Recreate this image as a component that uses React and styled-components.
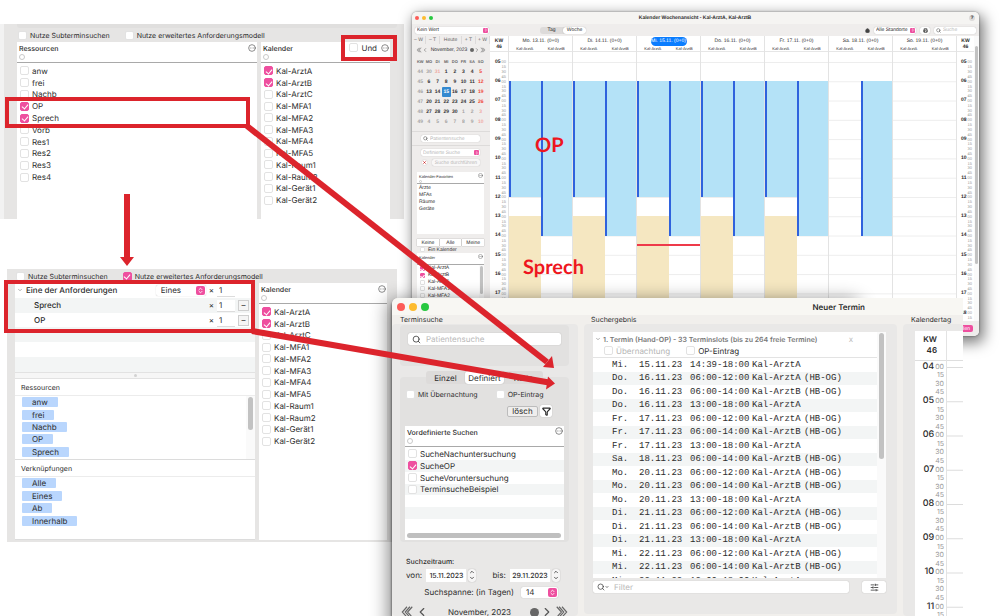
import styled, { createGlobalStyle, css } from "styled-components"
import { ChevronLeft, ChevronRight, ChevronDown, ChevronUp, ChevronsUpDown, CircleEllipsis, Search, House, Printer, SlidersHorizontal, Funnel } from "lucide-react"

const GlobalStyle = createGlobalStyle`
    * {
        box-sizing: border-box;
    }
    body {
        margin: 0;
        background-color: white;
        font-family: Inter, "Liberation Sans", sans-serif;
        font-size: 8px;
        color: #2c2c2c;
        text-rendering: geometricPrecision;
    }
    button, input, select {
        font: inherit;
        color: inherit;
        margin: 0;
        padding: 0;
        border: none;
        background: none;
        appearance: none;
        min-width: 0;
        text-rendering: inherit;
    }
    input:focus, select:focus {
        outline: none;
    }
    ::placeholder {
        color: #b9b9b9;
        opacity: 1;
    }
    svg {
        flex-shrink: 0;
        display: block;
    }
`

/* ---------- shared parts ---------- */

const Desktop = styled.main`
    position: relative;
    height: 100vh;
    overflow: hidden;
`
const Row = styled.div`
    display: flex;
    align-items: center;
    flex-shrink: 0;
    gap: ${props=>props.$gap || 0}px;
    height: ${props=>props.$height ? props.$height + "px" : "auto"};
    padding: ${props=>props.$padding || "0"};
    justify-content: ${props=>props.$justify || "flex-start"};
    white-space: nowrap;
`
const CheckLabel = styled.label`
    display: flex;
    align-items: center;
    gap: 3px;
    white-space: nowrap;
    color: ${props=>props.$muted ? "#b5b5b5" : "inherit"};
`
const Box = styled.input`
    display: grid;
    place-items: center;
    width: ${props=>props.$small ? 5 : 9}px;
    height: ${props=>props.$small ? 5 : 9}px;
    border: 1px solid #e2e2e2;
    border-radius: ${props=>props.$small ? 1 : 2}px;
    background-color: white;
    flex-shrink: 0;

    &:checked {
        border-color: #ee4f9f;
        background-color: #ee4f9f;
    }
    &:checked::after {
        content: "";
        width: ${props=>props.$small ? 2 : 3}px;
        height: ${props=>props.$small ? 3 : 5}px;
        border: solid white;
        border-width: 0 1px 1px 0;
        transform: rotate(40deg);
    }
`
const Knob = styled.span`
    display: grid;
    place-items: center;
    width: ${props=>props.$size || 9}px;
    height: ${props=>props.$size || 9}px;
    border-radius: ${props=>props.$size < 9 ? 1 : 2}px;
    background-color: #ee4f9f;
    color: white;
    flex-shrink: 0;
`
const Picker = styled.span`
    display: flex;
    align-items: center;
    height: ${props=>props.$height || 11}px;
    width: ${props=>props.$width ? props.$width + "px" : "auto"};
    padding: 0 1px 0 ${props=>props.$inset || 4}px;
    border-radius: 2px;
    background-color: white;
    box-shadow: 0 0 1px rgba(0, 0, 0, 0.3);
    color: ${props=>props.$muted ? "#b9b9b9" : "inherit"};

    select {
        flex: 1;
    }
`
const RunButton = styled.button`
    flex: 1;
    height: 7px;
    border-radius: 2px;
    background-color: #f8f7f7;
    box-shadow: 0 0 1px rgba(0, 0, 0, 0.3);
    color: #b9b9b9;
    white-space: nowrap;
`
const SearchField = styled.label`
    display: flex;
    align-items: center;
    gap: ${props=>props.$small ? 2 : 5}px;
    height: ${props=>props.$small ? 7 : 12}px;
    padding: 0 ${props=>props.$small ? 2 : 4}px;
    border-radius: 2px;
    background-color: white;
    box-shadow: 0 0 1px rgba(0, 0, 0, 0.3);
    flex: ${props=>props.$grow ? 1 : "none"};
    width: ${props=>props.$width ? props.$width + "px" : "auto"};

    input {
        flex: 1;
        width: 20px;
    }
`
const ListBox = styled.section`
    display: flex;
    flex-direction: column;
    background-color: white;
    flex: ${props=>props.$width ? "none" : 1};
    width: ${props=>props.$width ? props.$width + "px" : "auto"};
    min-width: 0;
`
const ListHead = styled.header`
    display: flex;
    justify-content: space-between;
    height: ${props=>props.$small ? 12 : 21}px;
    padding: 1px 1px 0 2px;
    border-bottom: 1px solid #a9a9a9;
    flex-shrink: 0;
`
const ListTitle = styled.h2`
    margin: 0;
    font-size: ${props=>props.$small ? 4 : 7}px;
    line-height: ${props=>props.$small ? 7 : 11}px;
    font-weight: 500;
    white-space: nowrap;
`
const Dot = styled.span`
    display: block;
    width: ${props=>props.$small ? 3 : 6}px;
    height: ${props=>props.$small ? 3 : 6}px;
    border: 1px solid #c9c9c9;
    border-radius: 50%;
`
const List = styled.ul`
    list-style: none;
    margin: 0;
    padding: 0;
    display: grid;
    grid-auto-rows: minmax(0, 1fr);
    height: ${props=>props.$height}px;
    margin-top: ${props=>props.$top || 0}px;

    li {
        display: flex;
        align-items: center;
        padding-left: 3px;
    }
    ${props=>props.$striped && css`
        li:nth-child(even) {
            background-color: #f3f5f5;
        }
    `}
`
const Lights = styled.div`
    display: flex;
    gap: ${props=>props.$gap}px;

    span {
        width: ${props=>props.$size}px;
        height: ${props=>props.$size}px;
        border-radius: 50%;
        background-color: #fc5b57;
    }
    span:nth-child(2) {
        background-color: #fdbb2e;
    }
    span:nth-child(3) {
        background-color: #28c840;
    }
`
const Segments = styled.div`
    display: flex;
    border-radius: 3px;
    background-color: #dddbda;
    height: ${props=>props.$height}px;
    width: ${props=>props.$width}px;
`
const Segment = styled.button`
    flex: 1;
    border-radius: 3px;
    background-color: ${props=>props.$active ? "white" : "transparent"};
    box-shadow: ${props=>props.$active ? "0 0 1px rgba(0, 0, 0, 0.3)" : "none"};
`

const Check = ({ label, checked, small, muted }) => (
  <CheckLabel $muted={muted}>
    <Box type="checkbox" $small={small} defaultChecked={checked} disabled={muted}/>
    {label}
  </CheckLabel>
)

const PinkSelect = ({ label, value, small, width, muted }) => (
  <Picker $height={small ? 7 : 11} $inset={small ? 2 : 5} $width={width} $muted={muted}>
    <select aria-label={label}><option>{value}</option></select>
    <Knob $size={small ? 5 : 9}><ChevronsUpDown size={small ? 4 : 7} strokeWidth={3}/></Knob>
  </Picker>
)

/* ---------- requirement panels on the left ---------- */

const Panel = styled.section`
    position: absolute;
    left: ${props=>props.$left}px;
    top: ${props=>props.$top}px;
    width: ${props=>props.$width}px;
    background-color: #e6e5e4;
    border-left: ${props=>props.$edge || 0}px solid #f2f2f2;
`
const PanelTop = styled.div`
    height: 4px;
    margin: 0 7px 0 13px;
    border-radius: 0 0 3px 3px;
    background-color: #e0dfde;
`
const PanelChecks = styled.div`
    display: flex;
    align-items: center;
    gap: 15px;
    height: 14px;
    padding-left: ${props=>props.$inset}px;
    font-size: 7px;
`
const Columns = styled.div`
    display: flex;
    gap: ${props=>props.$gap}px;
    height: ${props=>props.$height}px;
    padding: ${props=>props.$padding};
`
const Stack = styled.div`
    display: flex;
    flex-direction: column;
    flex: 1;
    min-width: 0;
`
const Tree = styled.div`
    display: grid;
    grid-auto-rows: 1fr;
    height: 89px;
    background-color: white;
`
const TreeRow = styled.div`
    display: flex;
    align-items: center;
    padding: 0 6px 0 ${props=>props.$level ? 19 : 2}px;
    gap: 3px;
    background-color: ${props=>props.$tinted ? "#f3f5f5" : "white"};

    strong {
        flex: 1;
        font-weight: 500;
    }
`
const Count = styled.input`
    width: 18px;
    height: 11px;
    padding-left: 2px;
    background-color: white;
    box-shadow: 0 1px 0 #dcdcdc;
`
const MinusButton = styled.button`
    width: 11px;
    height: 11px;
    line-height: 8px;
    border: 1px solid #cfcfcf;
    background-color: #f5f5f5;
`
const RowEnd = styled.span`
    width: 11px;
`
const Splitter = styled.div`
    display: grid;
    place-items: center;
    height: 7px;
    background-color: #f6f6f6;
    border-top: 1px solid #e2e2e2;
    border-bottom: 1px solid #e2e2e2;

    &::after {
        content: "";
        width: 3px;
        height: 3px;
        border-radius: 50%;
        background-color: #d2d2d2;
    }
`
const ChipHead = styled.h2`
    display: flex;
    align-items: center;
    height: 17px;
    margin: 0;
    padding: 0 8px 0 6px;
    font-size: 7px;
    font-weight: 400;
    background-color: white;
    border-bottom: 1px solid #ececec;
`
const ChipArea = styled.div`
    display: flex;
    justify-content: space-between;
    height: ${props=>props.$height}px;
    padding-left: 7px;
    background-color: white;
    border-bottom: 1px solid #dcdcdc;
`
const Chips = styled.div`
    display: grid;
    grid-auto-rows: 1fr;
    align-items: center;
    justify-items: start;
    height: ${props=>props.$height}px;
`
const Chip = styled.span`
    height: 10px;
    line-height: 10px;
    padding: 0 10px;
    border-radius: 1px;
    background-color: #b9d6fd;
`
const Track = styled.div`
    width: ${props=>props.$width}px;
    padding: ${props=>props.$top || 1}px ${props=>props.$pad || 1}px 0;
    background-color: #fafafa;
    flex-shrink: 0;
`
const Thumb = styled.div`
    height: ${props=>props.$length}px;
    border-radius: 3px;
    background-color: #c2c2c2;
`

const calendars = ["Kal-ArztA", "Kal-ArztB", "Kal-ArztC", "Kal-MFA1", "Kal-MFA2", "Kal-MFA3", "Kal-MFA4", "Kal-MFA5", "Kal-Raum1", "Kal-Raum2", "Kal-Gerät1", "Kal-Gerät2"]
const resources = ["anw", "frei", "Nachb", "OP", "Sprech", "Vorb", "Res1", "Res2", "Res3", "Res4"]

const CheckList = ({ title, items, checked, width, height, top, extra }) => (
  <ListBox $width={width}>
    <ListHead>
      <div>
        <ListTitle>{title}</ListTitle>
        <Dot/>
      </div>
      <Row $gap={4} $height={9}>
        {extra}
        <CircleEllipsis size={8} strokeWidth={2} color="#555"/>
      </Row>
    </ListHead>
    <List $height={height} $top={top}>
      {items.map(item=>(
        <li key={item}><Check label={item} checked={checked.includes(item)}/></li>
      ))}
    </List>
  </ListBox>
)

const SimplePanel = () => (
  <Panel $left={0} $top={24} $width={404} $edge={4}>
    <PanelTop/>
    <PanelChecks $inset={14}>
      <Check label="Nutze Subterminsuchen"/>
      <Check label="Nutze erweitertes Anforderungsmodell"/>
    </PanelChecks>
    <Columns $gap={4} $height={177} $padding="0 14px 0 13px">
      <CheckList title="Ressourcen" items={resources} checked={["OP", "Sprech"]} height={118} top={2}/>
      <CheckList title="Kalender" items={calendars} checked={["Kal-ArztA", "Kal-ArztB"]} width={129} height={141} top={2} extra={<Check label="Und"/>}/>
    </Columns>
  </Panel>
)

const AdvancedPanel = () => (
  <Panel $left={7} $top={269} $width={390}>
    <PanelChecks $inset={9}>
      <Check label="Nutze Subterminsuchen"/>
      <Check label="Nutze erweitertes Anforderungsmodell" checked/>
    </PanelChecks>
    <Columns $gap={4} $height={259} $padding="0 10px 2px 8px">
      <Stack>
        <Tree>
          <TreeRow>
            <ChevronDown size={6} color="#666"/>
            <strong>Eine der Anforderungen</strong>
            <PinkSelect label="Verknüpfung" value="Eines" width={50}/>
            <span>×</span>
            <Count aria-label="Anzahl" defaultValue="1"/>
            <RowEnd/>
          </TreeRow>
          {["Sprech", "OP"].map((name, i)=>(
            <TreeRow key={name} $level={1} $tinted={i === 0}>
              <strong>{name}</strong>
              <span>×</span>
              <Count aria-label={"Anzahl " + name} defaultValue="1"/>
              <MinusButton aria-label={name + " entfernen"}>–</MinusButton>
            </TreeRow>
          ))}
          <TreeRow $tinted/>
          <TreeRow/>
          <TreeRow $tinted/>
        </Tree>
        <Splitter/>
        <ChipHead>Ressourcen</ChipHead>
        <ChipArea $height={64}>
          <Chips $height={62}>
            {resources.slice(0, 5).map(name=><Chip key={name}>{name}</Chip>)}
          </Chips>
          <Track $width={9} $pad={2}><Thumb $length={33}/></Track>
        </ChipArea>
        <ChipHead>Verknüpfungen</ChipHead>
        <ChipArea $height={63}>
          <Chips $height={50}>
            {["Alle", "Eines", "Ab", "Innerhalb"].map(name=><Chip key={name}>{name}</Chip>)}
          </Chips>
        </ChipArea>
      </Stack>
      <CheckList title="Kalender" items={calendars} checked={["Kal-ArztA", "Kal-ArztB"]} width={128} height={141} top={2}/>
    </Columns>
  </Panel>
)

/* ---------- week calendar window ---------- */

const WeekWindow = styled.section`
    position: absolute;
    left: 412px;
    right: 21px;
    top: 12px;
    height: 324px;
    display: flex;
    flex-direction: column;
    overflow: hidden;
    isolation: isolate;
    border-radius: 5px;
    background-color: #efedec;
    font-family: "Liberation Sans", Arial, sans-serif;
    font-size: 5px;
`
const WeekShadow = styled.div`
    position: absolute;
    left: 412px;
    right: 21px;
    top: 12px;
    height: 324px;
    border-radius: 5px;
    box-shadow: 0 0 2px rgba(0, 0, 0, 0.5), 3px 5px 14px 2px rgba(0, 0, 0, 0.5);
`
const WeekTitle = styled.header`
    display: grid;
    grid-template-columns: 1fr auto 1fr;
    align-items: center;
    height: 12px;
    padding: 0 4px 0 3px;
    background-color: #f5f4f2;
    font-weight: 600;
    flex-shrink: 0;
`
const Help = styled.button`
    justify-self: end;
    width: 6px;
    height: 6px;
    line-height: 6px;
    border-radius: 50%;
    background-color: #dcdad9;
`
const WeekTools = styled.div`
    display: flex;
    align-items: center;
    justify-content: space-between;
    height: 12px;
    padding: 0 3px;
    flex-shrink: 0;
`
const IconButton = styled.button`
    display: grid;
    place-items: center;
    width: ${props=>props.$width}px;
    height: ${props=>props.$height}px;
    border-radius: 2px;
    background-color: white;
    box-shadow: 0 0 1px rgba(0, 0, 0, 0.3);
`
const WeekBody = styled.div`
    display: flex;
    flex: 1;
    min-height: 0;
    overflow: hidden;
`
const Sidebar = styled.aside`
    width: 78px;
    flex-shrink: 0;
    overflow: hidden;
`
const StepBar = styled.div`
    display: grid;
    grid-template-columns: 14px 14px 1fr 14px 14px;
    height: 8px;

    button {
        border-right: 1px solid #dcdada;
        font-weight: 500;
        color: #666;
        white-space: nowrap;
    }
`
const MonthTable = styled.table`
    width: 69px;
    margin: 0 4px 4px;
    border-collapse: collapse;
    table-layout: fixed;
    line-height: 10px;

    th, td {
        padding: 0;
        height: 10px;
        text-align: center;
        font-size: 5px;
        font-weight: 600;
    }
    th {
        height: 11px;
        font-size: 4px;
        color: #666;
    }
`
const Day = styled.td`
    color: ${props=>props.$sunday ? "#f04a3a" : "#333"};
    opacity: ${props=>props.$faint ? 0.4 : 1};

    span {
        display: block;
        border-radius: 1px;
        background-color: ${props=>props.$today ? "#3489d0" : "transparent"};
        color: ${props=>props.$today ? "white" : "inherit"};
    }
`
const SideGroup = styled.div`
    display: flex;
    flex-direction: column;
    gap: ${props=>props.$gap || 0}px;
    padding: 3px 10px 3px 9px;
    border-top: 1px solid #dddbda;
`
const SideList = styled.div`
    display: flex;
    flex-direction: column;
    height: ${props=>props.$height}px;
    margin: ${props=>props.$margin};
    background-color: white;
`
const Favourites = styled.ul`
    list-style: none;
    margin: 1px 0 0;
    padding: 0 0 0 2px;
    line-height: 7px;
    font-weight: 500;
`
const TripleButtons = styled.div`
    display: grid;
    grid-template-columns: 1fr 1fr 1fr;
    gap: 1px;
    margin: 5px 6px 0 5px;

    button {
        height: 7px;
        background-color: white;
        box-shadow: 0 0 1px rgba(0, 0, 0, 0.4);
    }
`
const WeekGrid = styled.div`
    flex: 1;
    display: grid;
    grid-template-columns: 18px repeat(7, 1fr) 18px 5px;
    background-color: white;
    min-width: 0;
`
const WeekCol = styled.div`
    display: flex;
    flex-direction: column;
    min-width: 0;
    overflow: hidden;
    border-left: ${props=>props.$line ? "1px solid #e3e3e3" : "none"};
`
const WeekHead = styled.div`
    height: 16px;
    border-bottom: 1px solid #e6e6e6;
    text-align: center;
    font-weight: 600;
    flex-shrink: 0;
    white-space: nowrap;

    div {
        display: flex;
        justify-content: space-around;
        font-size: 4px;
        line-height: 4px;
        font-weight: 400;
    }
`
const DayName = styled.span`
    display: block;
    width: 36px;
    margin: 1px auto 1px;
    line-height: 9px;
    font-weight: 500;
    border-radius: 5px;
    background-color: ${props=>props.$today ? "#0a7dff" : "transparent"};
    color: ${props=>props.$today ? "white" : "inherit"};
`
const KwLabel = styled.span`
    display: block;
    line-height: 6px;
    padding-top: ${props=>props.$first ? 2 : 0}px;
`
const Slots = styled.div`
    display: grid;
    grid-template: repeat(14, 1fr) / 1fr 1fr;
    height: 270px;
    margin-top: 10px;
    flex-shrink: 0;
    background-image: linear-gradient(#ededed 1px, transparent 1px);
    background-size: 100% calc(100% / 14);
`
const Slot = styled.div`
    grid-column: ${props=>props.$col};
    grid-row: ${props=>props.$from - 4} / ${props=>props.$to - 4};
    background-color: ${props=>props.$kind === "op" ? "#b4e2f7" : "#f5e7c1"};
    border-left: ${props=>props.$kind === "op" ? "2px solid #2f62dd" : "none"};
`
const NowLine = styled.div`
    grid-column: 1 / 3;
    grid-row: 10 / 11;
    align-self: center;
    height: 2px;
    z-index: 1;
    background-color: #ee3a4a;
`
const Hours = styled.div`
    display: grid;
    grid-auto-rows: minmax(0, 1fr);
    height: ${props=>props.$height}px;
    margin-top: ${props=>props.$top}px;
    flex-shrink: 0;
`
const Hour = styled.div`
    display: grid;
    grid-template-rows: repeat(4, minmax(0, 1fr));
    font-size: ${props=>props.$small ? 4 : 7}px;
    line-height: 1;
    color: #999;
    padding-right: 2px;

    span {
        display: flex;
        align-items: center;
        justify-content: flex-end;
        gap: 1px;
    }
    b {
        font-size: ${props=>props.$small ? 5 : 9}px;
        font-weight: ${props=>props.$small ? 700 : 500};
        color: #2c2c2c;
    }
`
const WeekFooter = styled.footer`
    display: flex;
    justify-content: flex-end;
    align-items: center;
    height: 15px;
    padding-right: 6px;
    flex-shrink: 0;
`
const PinkButton = styled.button`
    height: 7px;
    padding: 0 3px;
    border-radius: 2px;
    background-color: #ee4f9f;
    color: white;
`

const pad = n => String(n).padStart(2, "0")

const HourScale = ({ from, count, height, top, small }) => (
  <Hours $height={height} $top={top}>
    {Array.from({ length: count }, (_, i)=>(
      <Hour key={i} $small={small}>
        <span><b>{pad(from + i)}</b>00</span>
        <span>15</span>
        <span>30</span>
        <span>45</span>
      </Hour>
    ))}
  </Hours>
)

const weeks = [
  [44, 30, 31, 1, 2, 3, 4, 5],
  [45, 6, 7, 8, 9, 10, 11, 12],
  [46, 13, 14, 15, 16, 17, 18, 19],
  [47, 20, 21, 22, 23, 24, 25, 26],
  [48, 27, 28, 29, 30, 1, 2, 3],
  [49, 4, 5, 6, 7, 8, 9, 10],
]
const isFaint = (row, col, day) => col === 0 || (row === 0 && day > 20) || (row > 3 && day < 20)

const days = [
  { name: "Mo. 13.11. (0+0)", full: true },
  { name: "Di. 14.11. (0+0)", full: true },
  { name: "Mi. 15.11. (0+0)", full: true, today: true },
  { name: "Do. 16.11. (0+0)", full: true },
  { name: "Fr. 17.11. (0+0)", full: true },
  { name: "Sa. 18.11. (0+0)", second: true },
  { name: "So. 19.11. (0+0)" },
]

const YearArrow = ({ size, next }) => (
  <svg width={size} height={size} viewBox="0 0 24 24" fill="none" stroke="#666" strokeWidth="2">
    {next
      ? <path d="M3 3l8 9-8 9M7 3l8 9-8 9M12 3l8 9-8 9"/>
      : <path d="M21 3l-8 9 8 9M17 3l-8 9 8 9M12 3l-8 9 8 9"/>}
  </svg>
)

const MonthNav = ({ size, label, height, padding }) => (
  <Row $height={height} $padding={padding} $justify="space-between">
    <Row $gap={size > 8 ? 1 : 0}>
      <YearArrow size={size}/>
      <ChevronLeft size={size} strokeWidth={2} color="#555"/>
    </Row>
    <span>{label}</span>
    <Row $gap={size > 8 ? 1 : 0}>
      <svg width={size > 8 ? 9 : 4} height={size > 8 ? 9 : 4} viewBox="0 0 10 10"><circle cx="5" cy="5" r="5" fill="#666"/></svg>
      <ChevronRight size={size} strokeWidth={2} color="#555"/>
      <YearArrow size={size} next/>
    </Row>
  </Row>
)

const SmallHead = ({ title }) => (
  <ListHead $small>
    <div>
      <ListTitle $small>{title}</ListTitle>
      <Dot $small/>
    </div>
    <CircleEllipsis size={5} color="#555"/>
  </ListHead>
)

const WeekCalendar = () => (
  <>
    <WeekShadow/>
    <WeekWindow>
      <WeekTitle>
        <Lights $gap={3} $size={4}><span/><span/><span/></Lights>
        <span>Kalender Wochenansicht - Kal-ArztA, Kal-ArztB</span>
        <Help>?</Help>
      </WeekTitle>
      <WeekTools>
        <Row $gap={51}>
          <PinkSelect label="Ansicht" value="Kein Wert" small width={74}/>
          <Segments $height={7} $width={46}>
            <Segment>Tag</Segment>
            <Segment $active>Woche</Segment>
          </Segments>
        </Row>
        <Row $gap={4}>
          <House size={5} fill="#444" color="#444"/>
          <PinkSelect label="Standort" value="Alle Standorte" small width={42}/>
          <IconButton $width={10} $height={7} aria-label="Drucken"><Printer size={5} strokeWidth={3}/></IconButton>
          <SearchField $small $width={42}>
            <Search size={5}/>
            <input aria-label="Suche" placeholder="Suche"/>
          </SearchField>
        </Row>
      </WeekTools>
      <WeekBody>
        <Sidebar>
          <StepBar>
            <button>– W</button>
            <button>– T</button>
            <button>Heute</button>
            <button>+ T</button>
            <button>+ W</button>
          </StepBar>
          <MonthNav size={6} height={12} padding="0 4px" label="November, 2023"/>
          <MonthTable>
            <thead>
              <tr>{["KW", "MO", "DI", "MI", "DO", "FR", "SA", "SO"].map(d=><th key={d}>{d}</th>)}</tr>
            </thead>
            <tbody>
              {weeks.map((week, row)=>(
                <tr key={week[0]}>
                  {week.map((day, col)=>(
                    <Day key={col} $sunday={col === 7 || day === 31} $faint={isFaint(row, col, day)} $today={row === 2 && day === 15}>
                      <span>{day}</span>
                    </Day>
                  ))}
                </tr>
              ))}
            </tbody>
          </MonthTable>
          <SideGroup>
            <SearchField $small>
              <Search size={5}/>
              <input aria-label="Patientensuche" placeholder="Patientensuche"/>
            </SearchField>
          </SideGroup>
          <SideGroup $gap={3}>
            <PinkSelect label="Definierte Suche" value="Definierte Suche" small muted/>
            <Row $gap={5} $padding="0 0 0 1px">
              <IconButton $width={5} $height={5} aria-label="Suche löschen"><svg width="3" height="3" viewBox="0 0 6 6"><path d="M1 1l4 4M5 1l-4 4" stroke="#c22" strokeWidth="2"/></svg></IconButton>
              <RunButton>Suche durchführen</RunButton>
            </Row>
          </SideGroup>
          <SideList $height={62} $margin="3px 6px 0 5px">
            <SmallHead title="Kalender-Favoriten"/>
            <Favourites>
              <li>Ärzte</li>
              <li>MFAs</li>
              <li>Räume</li>
              <li>Geräte</li>
            </Favourites>
          </SideList>
          <TripleButtons>
            <button>Keine</button>
            <button>Alle</button>
            <button>Meine</button>
          </TripleButtons>
          <Row $height={7} $padding="0 0 0 8px"><Check small label="Ein Kalender"/></Row>
          <SideList $height={80} $margin="0 6px 0 5px">
            <SmallHead title="Kalender"/>
            <Columns $height={48}>
              <Stack>
                <List $height={48}>
                  {calendars.slice(0, 7).map(name=>(
                    <li key={name}><Check small label={name} checked={name === "Kal-ArztA" || name === "Kal-ArztB"}/></li>
                  ))}
                </List>
              </Stack>
              <Track $width={5}><Thumb $length={28}/></Track>
            </Columns>
          </SideList>
        </Sidebar>
        <WeekGrid>
          <WeekCol>
            <WeekHead><KwLabel $first>KW</KwLabel><KwLabel>46</KwLabel></WeekHead>
            <HourScale from={5} count={14} height={270} top={8} small/>
          </WeekCol>
          {days.map(day=>(
            <WeekCol key={day.name} $line>
              <WeekHead>
                <DayName $today={day.today}>{day.name}</DayName>
                <div><span>Kal-ArztA</span><span>Kal-ArztB</span></div>
              </WeekHead>
              <Slots>
                {day.full && <Slot $kind="op" $col={1} $from={6} $to={12}/>}
                {(day.full || day.second) && <Slot $kind="op" $col={2} $from={6} $to={14}/>}
                {day.full && <Slot $kind="talk" $col={1} $from={13} $to={18}/>}
                {day.today && <NowLine/>}
              </Slots>
            </WeekCol>
          ))}
          <WeekCol $line>
            <WeekHead><KwLabel $first>KW</KwLabel><KwLabel>46</KwLabel></WeekHead>
            <HourScale from={5} count={14} height={270} top={8} small/>
          </WeekCol>
          <Track $width={5} $top={10}><Thumb $length={218}/></Track>
        </WeekGrid>
      </WeekBody>
      <WeekFooter><PinkButton>Erstellen</PinkButton></WeekFooter>
    </WeekWindow>
  </>
)

/* ---------- new appointment window ---------- */

const TermWindow = styled.section`
    position: absolute;
    left: 392px;
    right: 37px;
    top: 298px;
    bottom: 0;
    display: flex;
    flex-direction: column;
    overflow: hidden;
    isolation: isolate;
    border-radius: 6px 0 0 0;
    background-color: #f1efec;
`
const TermShadow = styled.div`
    position: absolute;
    left: 392px;
    right: 137px;
    top: 300px;
    bottom: -20px;
    border-radius: 6px;
    box-shadow: -1px 0 2px rgba(0, 0, 0, 0.35), -4px 0 18px rgba(0, 0, 0, 0.45);
`
const TermTitle = styled.header`
    display: flex;
    align-items: center;
    justify-content: space-between;
    height: 17px;
    padding: 0 98px 0 5px;
    background-color: #f8f7f3;
    flex-shrink: 0;

    h1 {
        margin: 0;
        font-size: 8px;
        font-weight: 600;
    }
`
const TermBody = styled.div`
    display: flex;
    gap: 6px;
    flex: 1;
    min-height: 0;
`
const TermCol = styled.div`
    display: flex;
    flex-direction: column;
    flex: ${props=>props.$width ? "none" : 1};
    width: ${props=>props.$width ? props.$width + "px" : "auto"};
    min-width: 0;
`
const ColTitle = styled.h2`
    margin: 0;
    height: 9px;
    line-height: 10px;
    padding-left: ${props=>props.$inset}px;
    font-size: 7px;
    font-weight: 400;
    flex-shrink: 0;
`
const ColPanel = styled.div`
    flex: 1;
    display: flex;
    flex-direction: column;
    min-height: 0;
    padding: ${props=>props.$padding};
    border-radius: 4px;
    background-color: #e9e8e7;
`
const Group = styled.div`
    border-radius: 4px;
    background-color: #e2e1e0;
    height: ${props=>props.$height}px;
    padding: ${props=>props.$padding};
    flex-shrink: 0;
`
const TabRow = styled.div`
    display: flex;
    justify-content: center;
    margin: 5px 0 -7px;
    z-index: 1;
`
const SmallText = styled.div`
    font-size: 7px;
`
const ClearButton = styled.button`
    width: 31px;
    height: 11px;
    line-height: 8px;
    border: 1px solid #bcbcbc;
    border-radius: 2px;
    background-color: #efeeed;
`
const HScroll = styled.div`
    height: 5px;
    margin: 2px 3px 2px 2px;
    border-radius: 3px;
    background-color: #bfbfbf;
`
const DateInput = styled.input`
    width: 40px;
    height: 13px;
    margin-left: 2px;
    text-align: center;
    font-size: 7px;
    font-weight: 500;
    background-color: white;
`
const Stepper = styled.button`
    display: flex;
    flex-direction: column;
    align-items: center;
    justify-content: center;
    width: 8px;
    height: 13px;
    margin-left: 2px;
    border-radius: 3px;
    background-color: #f6f5f5;
    box-shadow: 0 0 1px rgba(0, 0, 0, 0.35);
`
const Results = styled.div`
    display: flex;
    height: 246px;
    background-color: white;
    overflow: hidden;
    flex-shrink: 0;
`
const ResultHead = styled.div`
    height: 26px;
    padding: 2px 0 0 2px;
    border-bottom: 1px solid #e3e3e3;
    flex-shrink: 0;

    h3 {
        margin: 0;
        flex: 1;
        font-size: 7px;
        font-weight: 600;
        color: #777;
    }
    h3 + span {
        color: #bbb;
    }
`
const ResultTable = styled.table`
    width: 100%;
    height: 230px;
    flex-shrink: 0;
    border-collapse: collapse;
    table-layout: fixed;
    font-family: "Liberation Mono", monospace;
    font-size: 9px;
    line-height: 12px;
    white-space: nowrap;

    td {
        padding: 0;
    }
    td:nth-child(1) {
        width: 46px;
        padding-left: 19px;
    }
    td:nth-child(2) {
        width: 51px;
    }
    td:nth-child(3) {
        width: 62px;
    }
    td:nth-child(4) {
        width: 52px;
    }
    tr:nth-child(even) {
        background-color: #f3f5f5;
    }
`
const DayView = styled.div`
    display: grid;
    grid-template-columns: 31px 1fr;
    background-color: white;
    overflow: hidden;
`
const DayKw = styled.div`
    height: 30px;
    padding: 3px 9px 0 0;
    text-align: right;
    line-height: 11px;
    border-bottom: 1px solid #dedede;
    font-size: 8px;
    font-weight: 600;
    flex-shrink: 0;
`
const DayLines = styled.div`
    height: 274px;
    margin-top: 6px;
    flex-shrink: 0;
    background-image: linear-gradient(#dcdcdc 1px, transparent 1px);
    background-size: 100% calc(100% / 8);
`

const results = [
  ["Mi.", "15.11.23", "14:39-18:00", "Kal-ArztA"],
  ["Do.", "16.11.23", "06:00-12:00", "Kal-ArztA", "(HB-OG)"],
  ["Do.", "16.11.23", "06:00-14:00", "Kal-ArztB", "(HB-OG)"],
  ["Do.", "16.11.23", "13:00-18:00", "Kal-ArztA"],
  ["Fr.", "17.11.23", "06:00-12:00", "Kal-ArztA", "(HB-OG)"],
  ["Fr.", "17.11.23", "06:00-14:00", "Kal-ArztB", "(HB-OG)"],
  ["Fr.", "17.11.23", "13:00-18:00", "Kal-ArztA"],
  ["Sa.", "18.11.23", "06:00-14:00", "Kal-ArztB", "(HB-OG)"],
  ["Mo.", "20.11.23", "06:00-12:00", "Kal-ArztA", "(HB-OG)"],
  ["Mo.", "20.11.23", "06:00-14:00", "Kal-ArztB", "(HB-OG)"],
  ["Mo.", "20.11.23", "13:00-18:00", "Kal-ArztA"],
  ["Di.", "21.11.23", "06:00-12:00", "Kal-ArztA", "(HB-OG)"],
  ["Di.", "21.11.23", "06:00-14:00", "Kal-ArztB", "(HB-OG)"],
  ["Di.", "21.11.23", "13:00-18:00", "Kal-ArztA"],
  ["Mi.", "22.11.23", "06:00-12:00", "Kal-ArztA", "(HB-OG)"],
  ["Mi.", "22.11.23", "06:00-14:00", "Kal-ArztB", "(HB-OG)"],
  ["Mi.", "22.11.23", "13:00-18:00", "Kal-ArztA"],
]
const searches = ["SucheNachuntersuchung", "SucheOP", "SucheVoruntersuchung", "TerminsucheBeispiel"]

const DateField = ({ label, value }) => (
  <Row>
    <label>{label} <DateInput defaultValue={value}/></label>
    <Stepper aria-label={label + " ändern"}>
      <ChevronUp size={6} strokeWidth={3}/>
      <ChevronDown size={6} strokeWidth={3}/>
    </Stepper>
  </Row>
)

const NewAppointment = () => (
  <>
    <TermShadow/>
    <TermWindow>
      <TermTitle>
        <Lights $gap={4} $size={8}><span/><span/><span/></Lights>
        <h1>Neuer Termin</h1>
      </TermTitle>
      <TermBody>
        <TermCol $width={186}>
          <ColTitle $inset={8}>Terminsuche</ColTitle>
          <ColPanel $padding="1px 9px 0 8px">
            <Group $height={41} $padding="8px 8px">
              <SearchField>
                <Search size={9}/>
                <input aria-label="Patientensuche" placeholder="Patientensuche"/>
              </SearchField>
            </Group>
            <TabRow>
              <Segments $height={13} $width={117}>
                <Segment>Einzel</Segment>
                <Segment $active>Definiert</Segment>
                <Segment>Kette</Segment>
              </Segments>
            </TabRow>
            <Group $height={165} $padding="12px 5px 0">
              <SmallText>
                <Row $height={10} $gap={18} $padding="0 0 0 1px">
                  <Check label="Mit Übernachtung"/>
                  <Check label="OP-Eintrag"/>
                </Row>
              </SmallText>
              <Row $height={27} $gap={2} $padding="0 12px 3px 0" $justify="flex-end">
                <ClearButton>lösch</ClearButton>
                <IconButton $width={12} $height={12} aria-label="Filtern"><Funnel size={9} strokeWidth={3}/></IconButton>
              </Row>
              <ListBox>
                <ListHead>
                  <div>
                    <ListTitle>Vordefinierte Suchen</ListTitle>
                    <Dot/>
                  </div>
                  <CircleEllipsis size={8} color="#555"/>
                </ListHead>
                <List $height={83} $top={1} $striped>
                  {searches.map(name=>(
                    <li key={name}><Check label={name} checked={name === "SucheOP"}/></li>
                  ))}
                  <li/>
                  <li/>
                  <li/>
                </List>
                <HScroll/>
              </ListBox>
            </Group>
            <Row $height={24} $padding="14px 0 0 6px">
              <ListTitle>Suchzeitraum:</ListTitle>
            </Row>
            <Row $height={18} $padding="0 9px 0 6px" $justify="space-between">
              <DateField label="von:" value="15.11.2023"/>
              <DateField label="bis:" value="29.11.2023"/>
            </Row>
            <Row $height={16} $gap={7} $padding="0 11px 0 0" $justify="flex-end">
              <span>Suchspanne: (in Tagen)</span>
              <PinkSelect label="Suchspanne" value="14" width={37}/>
            </Row>
            <MonthNav size={14} height={24} label="November, 2023"/>
          </ColPanel>
        </TermCol>
        <TermCol>
          <ColTitle $inset={7}>Suchergebnis</ColTitle>
          <ColPanel $padding="8px 11px 0 9px">
            <Results>
              <Stack>
                <ResultHead>
                  <Row $height={10} $gap={2} $padding="0 24px 0 0">
                    <ChevronDown size={6} color="#666"/>
                    <h3>1. Termin (Hand-OP) - 33 Terminslots (bis zu 264 freie Termine)</h3>
                    <span>x</span>
                  </Row>
                  <Row $height={13} $gap={16} $padding="0 0 0 9px">
                    <Check label="Übernachtung" muted/>
                    <Check label="OP-Eintrag"/>
                  </Row>
                </ResultHead>
                <ResultTable>
                  <tbody>
                    {results.map((row, i)=>(
                      <tr key={i}>
                        {row.map(cell=><td key={cell}>{cell}</td>)}
                        {row.length < 5 && <td/>}
                      </tr>
                    ))}
                  </tbody>
                </ResultTable>
              </Stack>
              <Track $width={9} $pad={2}><Thumb $length={126}/></Track>
            </Results>
            <Row $height={18} $gap={13}>
              <SearchField $grow>
                <Row>
                  <Search size={8}/>
                  <ChevronDown size={4} strokeWidth={4}/>
                </Row>
                <input aria-label="Filter" placeholder="Filter"/>
              </SearchField>
              <IconButton $width={24} $height={12} aria-label="Einstellungen"><SlidersHorizontal size={9}/></IconButton>
            </Row>
          </ColPanel>
          <Row $height={2}/>
        </TermCol>
        <TermCol $width={60}>
          <ColTitle $inset={8}>Kalendertag</ColTitle>
          <ColPanel $padding="7px 0 0 12px">
            <DayView>
              <WeekCol>
                <DayKw>KW<br/>46</DayKw>
                <HourScale from={4} count={8} height={274} top={1}/>
              </WeekCol>
              <WeekCol $line>
                <DayKw/>
                <DayLines/>
              </WeekCol>
            </DayView>
          </ColPanel>
        </TermCol>
      </TermBody>
    </TermWindow>
  </>
)

/* ---------- annotations ---------- */

const Marks = styled.svg`
    position: absolute;
    left: 0;
    top: 0;
    pointer-events: none;
`
const Note = styled.span`
    position: absolute;
    left: ${props=>props.$left}px;
    top: ${props=>props.$top}px;
    line-height: 24px;
    font-family: Lato, sans-serif;
    font-size: 20px;
    font-weight: 700;
    color: #ee1620;
`

const Annotations = () => (
  <Marks width="1000" height="616" viewBox="0 0 1000 616" fill="none" stroke="#dc242c" strokeWidth="4">
    <rect x="343" y="37" width="52" height="22"/>
    <rect x="7" y="99" width="241" height="27"/>
    <rect x="6" y="282" width="247" height="49"/>
    <path d="M247 126L547 362" strokeWidth="6"/>
    <path d="M252 331L549 382.500" strokeWidth="6"/>
    <path d="M127 194V259" strokeWidth="6"/>
    <path d="M554 368l-2-12-9 11zM555 383.500l-7-7-2 13zM127 266l-7-9h14z" fill="#dc242c" stroke="none"/>
  </Marks>
)

const App = () => {
  return (
    <Desktop>
        <GlobalStyle/>
        <SimplePanel/>
        <AdvancedPanel/>
        <WeekCalendar/>
        <Note $left={535} $top={133}>OP</Note>
        <Note $left={523} $top={255}>Sprech</Note>
        <NewAppointment/>
        <Annotations/>
    </Desktop>
  )
}

export default App
